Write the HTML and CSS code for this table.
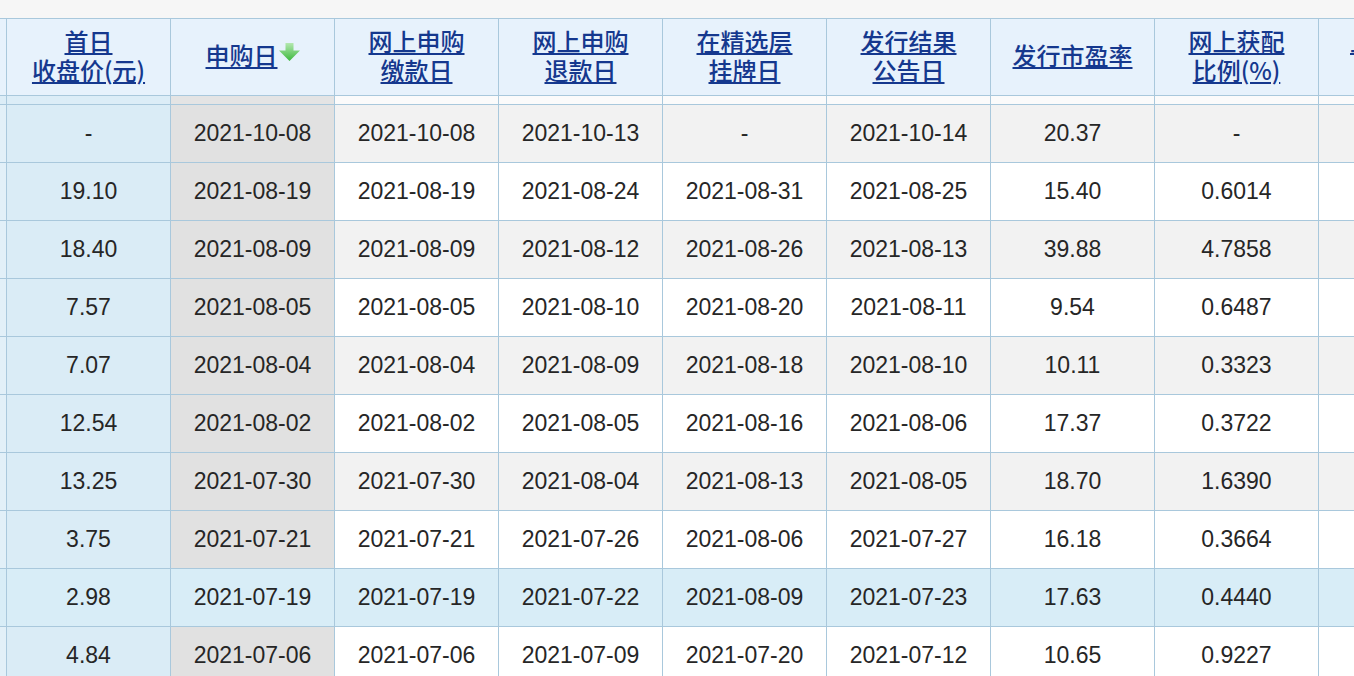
FILE: index.html
```html
<!DOCTYPE html>
<html lang="zh-CN">
<head>
<meta charset="utf-8">
<title>新股申购</title>
<link rel="stylesheet" href="styles.css">
</head>
<body>
<div class="topbar"></div>
<div class="grid">
  <div class="row head">
    <div class="c edge"></div>
    <div class="c"><a class="h">首日<br>收盘价(元)</a></div>
    <div class="c"><a class="h">申购日</a><svg class="sort" width="21" height="19" viewBox="0 0 21 19"><defs><linearGradient id="g" x1="0" y1="0" x2="0" y2="1"><stop offset="0" stop-color="#b4e8b0"/><stop offset="1" stop-color="#3cb83c"/></linearGradient></defs><path d="M6.5 0H14.5V7.5H21L10.5 18L0 7.5H6.5Z" fill="url(#g)"/></svg></div>
    <div class="c"><a class="h">网上申购<br>缴款日</a></div>
    <div class="c"><a class="h">网上申购<br>退款日</a></div>
    <div class="c"><a class="h">在精选层<br>挂牌日</a></div>
    <div class="c"><a class="h">发行结果<br>公告日</a></div>
    <div class="c"><a class="h">发行市盈率</a></div>
    <div class="c"><a class="h">网上获配<br>比例(%)</a></div>
    <div class="c"><a class="h">上市首日<br>涨幅(%)</a></div>
  </div>
  <div class="row strip">
    <div class="c edge"></div><div class="c"></div><div class="c"></div><div class="c"></div><div class="c"></div><div class="c"></div><div class="c"></div><div class="c"></div><div class="c"></div><div class="c"></div>
  </div>
  <div class="row alt">
    <div class="c edge"></div><div class="c">-</div><div class="c">2021-10-08</div><div class="c">2021-10-08</div><div class="c">2021-10-13</div><div class="c">-</div><div class="c">2021-10-14</div><div class="c">20.37</div><div class="c">-</div><div class="c"></div>
  </div>
  <div class="row">
    <div class="c edge"></div><div class="c">19.10</div><div class="c">2021-08-19</div><div class="c">2021-08-19</div><div class="c">2021-08-24</div><div class="c">2021-08-31</div><div class="c">2021-08-25</div><div class="c">15.40</div><div class="c">0.6014</div><div class="c"></div>
  </div>
  <div class="row alt">
    <div class="c edge"></div><div class="c">18.40</div><div class="c">2021-08-09</div><div class="c">2021-08-09</div><div class="c">2021-08-12</div><div class="c">2021-08-26</div><div class="c">2021-08-13</div><div class="c">39.88</div><div class="c">4.7858</div><div class="c"></div>
  </div>
  <div class="row">
    <div class="c edge"></div><div class="c">7.57</div><div class="c">2021-08-05</div><div class="c">2021-08-05</div><div class="c">2021-08-10</div><div class="c">2021-08-20</div><div class="c">2021-08-11</div><div class="c">9.54</div><div class="c">0.6487</div><div class="c"></div>
  </div>
  <div class="row alt">
    <div class="c edge"></div><div class="c">7.07</div><div class="c">2021-08-04</div><div class="c">2021-08-04</div><div class="c">2021-08-09</div><div class="c">2021-08-18</div><div class="c">2021-08-10</div><div class="c">10.11</div><div class="c">0.3323</div><div class="c"></div>
  </div>
  <div class="row">
    <div class="c edge"></div><div class="c">12.54</div><div class="c">2021-08-02</div><div class="c">2021-08-02</div><div class="c">2021-08-05</div><div class="c">2021-08-16</div><div class="c">2021-08-06</div><div class="c">17.37</div><div class="c">0.3722</div><div class="c"></div>
  </div>
  <div class="row alt">
    <div class="c edge"></div><div class="c">13.25</div><div class="c">2021-07-30</div><div class="c">2021-07-30</div><div class="c">2021-08-04</div><div class="c">2021-08-13</div><div class="c">2021-08-05</div><div class="c">18.70</div><div class="c">1.6390</div><div class="c"></div>
  </div>
  <div class="row">
    <div class="c edge"></div><div class="c">3.75</div><div class="c">2021-07-21</div><div class="c">2021-07-21</div><div class="c">2021-07-26</div><div class="c">2021-08-06</div><div class="c">2021-07-27</div><div class="c">16.18</div><div class="c">0.3664</div><div class="c"></div>
  </div>
  <div class="row hover">
    <div class="c edge"></div><div class="c">2.98</div><div class="c">2021-07-19</div><div class="c">2021-07-19</div><div class="c">2021-07-22</div><div class="c">2021-08-09</div><div class="c">2021-07-23</div><div class="c">17.63</div><div class="c">0.4440</div><div class="c"></div>
  </div>
  <div class="row">
    <div class="c edge"></div><div class="c">4.84</div><div class="c">2021-07-06</div><div class="c">2021-07-06</div><div class="c">2021-07-09</div><div class="c">2021-07-20</div><div class="c">2021-07-12</div><div class="c">10.65</div><div class="c">0.9227</div><div class="c"></div>
  </div>
</div>
</body>
</html>
```
FILE: styles.css
```css
html, body {
  margin: 0;
  padding: 0;
  width: 1354px;
  height: 676px;
  overflow: hidden;
  background: #f6f6f6;
}

.topbar {
  height: 18px;
  background: #f6f6f6;
}

.grid {
  display: grid;
  grid-template-columns: 6px repeat(9, 163px);
  grid-template-rows: 76px 8px repeat(10, 57px);
  gap: 1px;
  width: 1474px;
  background: #a9c8dc;
  border-top: 1px solid #a9c8dc;
  font-family: "Liberation Sans", Arial, sans-serif;
  font-size: 23px;
  color: #262626;
}

.row {
  display: contents;
}

.c {
  display: flex;
  align-items: center;
  justify-content: center;
  text-align: center;
  background: #ffffff;
  overflow: hidden;
  white-space: nowrap;
  padding-bottom: 1px;
}

.row.alt > .c {
  background: #f2f2f2;
}

.row > .c:nth-child(2) {
  background: #daecf6;
}

.row > .c:nth-child(3) {
  background: #e1e1e1;
}

.row > .c.edge {
  background: #e2f0f8;
}

.row.hover > .c {
  background: #d8edf7;
}

.row.strip > .c {
  background: #fbfbfb;
  padding-bottom: 0;
}

.row.strip > .c:nth-child(2),
.row.strip > .c.edge {
  background: #dcedf7;
}

.row.strip > .c:nth-child(3) {
  background: #e4e4e4;
}

.row.head > .c {
  background: #e7f2fc;
  padding-bottom: 5px;
}

.h {
  font-family: "Noto Sans CJK SC", "Liberation Sans", sans-serif;
  font-size: 24px;
  font-weight: 500;
  line-height: 29px;
  color: #15388e;
  text-decoration: underline;
  text-underline-offset: 2px;
  cursor: pointer;
}

.row.head > .c:last-child {
  justify-content: flex-start;
  padding-left: 31px;
}

.sort {
  display: block;
  margin-left: 1px;
  margin-top: -4px;
}
```
